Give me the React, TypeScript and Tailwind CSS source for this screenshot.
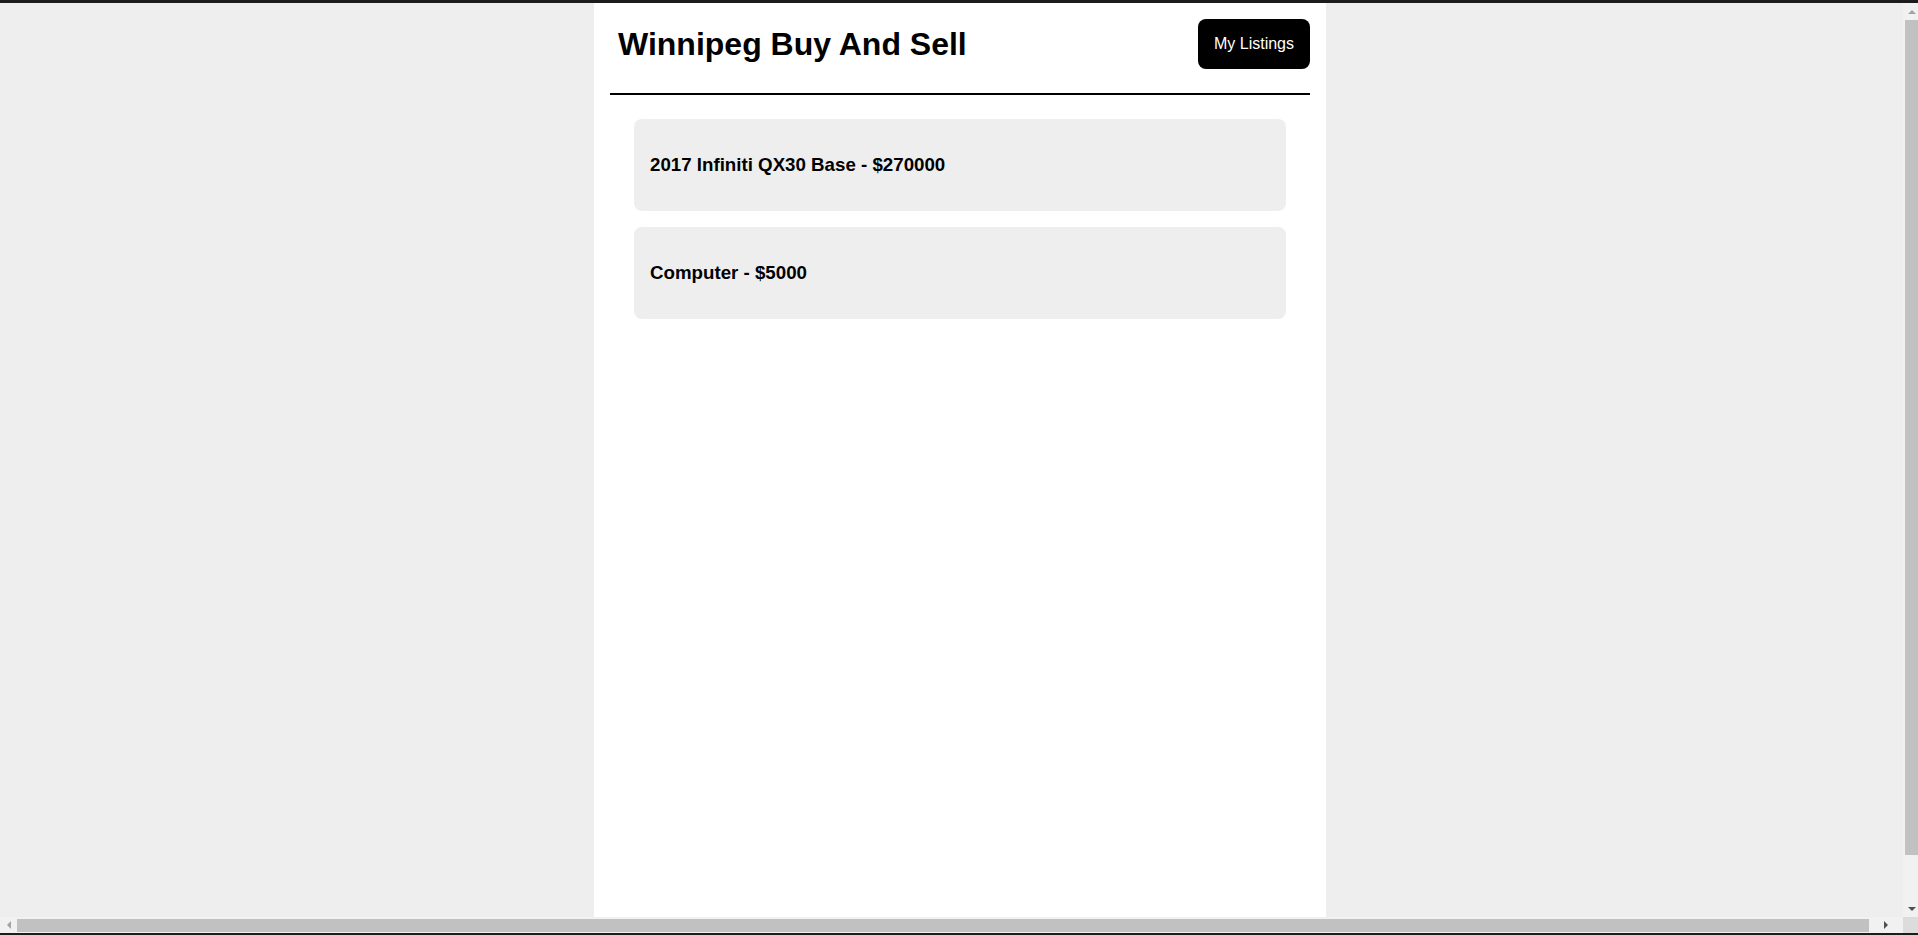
const listings = [
  { title: '2017 Infiniti QX30 Base', price: 270000 },
  { title: 'Computer', price: 5000 },
];

function Arrow({ dir, dim }: { dir: 'up' | 'down' | 'left' | 'right'; dim?: boolean }) {
  const pts = {
    up: '0,4 4,0 8,4',
    down: '0,0 8,0 4,4',
    left: '4,0 4,8 0,4',
    right: '0,0 0,8 4,4',
  }[dir];
  const vertical = dir === 'up' || dir === 'down';
  return (
    <svg width={vertical ? 8 : 4} height={vertical ? 4 : 8} viewBox={vertical ? '0 0 8 4' : '0 0 4 8'}>
      <polygon points={pts} fill={dim ? '#a3a3a3' : '#505050'} />
    </svg>
  );
}

export default function App() {
  return (
    <div className="w-[1918px] h-[935px] overflow-hidden flex flex-col bg-[#eeeeee] font-['Liberation_Sans',Arial,sans-serif]">
      <div className="h-[3px] bg-[#1c1c1e]" />
      <div className="flex flex-1 min-h-0">
        <main className="flex-1 min-w-0 h-full pl-[594px]">
          <div className="w-[732px] h-full bg-white px-4">
            <header className="flex items-center justify-between pl-2 pt-4 pb-6 border-b-2 border-black">
              <h1 className="text-[32px] font-bold leading-[37px] text-black">Winnipeg Buy And Sell</h1>
              <button className="h-[50px] px-4 rounded-lg bg-black text-white text-base leading-[18px]">
                My Listings
              </button>
            </header>
            <div className="flex flex-col gap-4 pt-6 px-6">
              {listings.map((l) => (
                <div key={l.title} className="h-[92px] flex items-center px-4 rounded-lg bg-[#eeeeee]">
                  <h3 className="text-[18.72px] font-bold text-black">
                    {l.title} - ${l.price}
                  </h3>
                </div>
              ))}
            </div>
          </div>
        </main>
        <div className="w-[15px] flex flex-col bg-[#f1f1f1]">
          <div className="h-[17px] flex items-center justify-center pl-[2px]">
            <Arrow dir="up" dim />
          </div>
          <div className="flex-1 flex flex-col">
            <div className="h-[835px] ml-[2px] bg-[#c1c1c1]" />
          </div>
          <div className="h-[17px] flex items-center justify-center pl-[2px]">
            <Arrow dir="down" />
          </div>
        </div>
      </div>
      <div className="h-[16px] flex">
        <div className="flex-1 flex items-center bg-[#f1f1f1]">
          <div className="w-[17px] flex justify-center">
            <Arrow dir="left" dim />
          </div>
          <div className="w-[1852px] h-[13px] bg-[#c1c1c1]" />
          <div className="flex-1 flex justify-center">
            <Arrow dir="right" />
          </div>
        </div>
        <div className="w-[15px] bg-[#dcdcdc]" />
      </div>
      <div className="h-[2px] bg-[#1c1c1e]" />
    </div>
  );
}
